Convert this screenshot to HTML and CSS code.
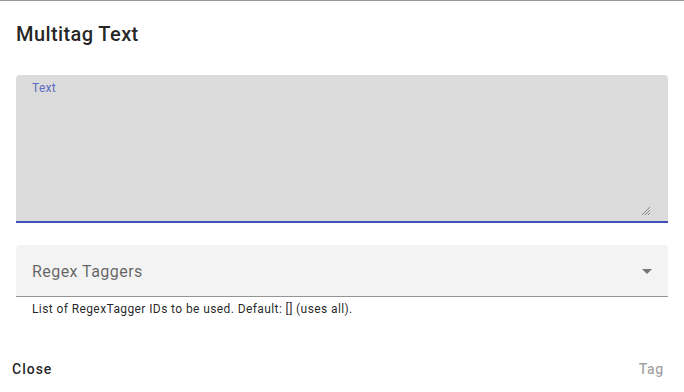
FILE: index.html
```html
<!DOCTYPE html>
<html>
<head>
<meta charset="utf-8">
<link rel="stylesheet" href="styles.css">
</head>
<body>
<div class="dialog">
  <h2 class="title">Multitag Text</h2>
  <div class="content">
    <div class="textfield">
      <label class="tf-label">Text</label>
      <svg class="resize" width="10" height="10" viewBox="0 0 10 10">
        <path d="M9 1 L1 9 M9 4 L4 9 M9 7 L7 9" stroke="#888" stroke-width="1" fill="none"/>
      </svg>
    </div>
    <div class="select">
      <span class="sel-label">Regex Taggers</span>
      <svg class="arrow" width="10" height="5" viewBox="0 0 10 5"><path d="M0 0 L10 0 L5 5 Z" fill="#757575"/></svg>
    </div>
    <p class="helper">List of RegexTagger IDs to be used. Default: [] (uses all).</p>
  </div>
  <div class="actions">
    <button class="btn btn-close">Close</button>
    <button class="btn btn-tag" disabled>Tag</button>
  </div>
</div>
</body>
</html>
```

FILE: styles.css
```css
html, body {
  margin: 0;
  padding: 0;
  background: #fff;
  font-family: Roboto, "Noto Sans", sans-serif;
}
.dialog {
  border-top: 1px solid #9a9a9a;
  width: 684px;
  height: 391px;
  display: flex;
  flex-direction: column;
}
.title {
  margin: 0;
  padding: 17px 16px 15px;
  font-size: 20px;
  line-height: 32px;
  font-weight: 500;
  letter-spacing: 0.4px;
  color: rgba(0,0,0,0.87);
}
.content {
  padding: 10px 16px 0;
}
.textfield {
  position: relative;
  height: 146px;
  background: #dbdbdb;
  border-radius: 4px 4px 0 0;
  border-bottom: 2px solid #3f51b5;
}
.tf-label {
  position: absolute;
  left: 16px;
  top: 6px;
  font-size: 12px;
  line-height: 14px;
  letter-spacing: 0.3px;
  color: #5c6bc0;
}
.resize {
  position: absolute;
  right: 17px;
  bottom: 5px;
}
.select {
  margin-top: 22px;
  height: 51px;
  background: #f3f3f3;
  border-radius: 4px 4px 0 0;
  border-bottom: 1px solid #949494;
  display: flex;
  align-items: center;
  justify-content: space-between;
  padding: 0 16px;
}
.sel-label {
  font-size: 16px;
  color: rgba(0,0,0,0.6);
  letter-spacing: 0.45px;
  padding-top: 2px;
}
.arrow {
  margin-top: 1px;
}
.helper {
  margin: 2px 16px 0;
  font-size: 12px;
  line-height: 20px;
  color: rgba(0,0,0,0.87);
  letter-spacing: 0.4px;
}
.actions {
  margin-top: auto;
  display: flex;
  justify-content: space-between;
  padding: 0 12px 5px 4px;
}
.btn {
  font-family: Roboto, "Noto Sans", sans-serif;
  font-size: 14px;
  font-weight: 500;
  background: none;
  border: none;
  padding: 6px 8px;
  line-height: 24px;
}
.btn-close { color: rgba(0,0,0,0.87); letter-spacing: 1px; }
.btn-tag { color: rgba(0,0,0,0.38); letter-spacing: 0.7px; }
```
